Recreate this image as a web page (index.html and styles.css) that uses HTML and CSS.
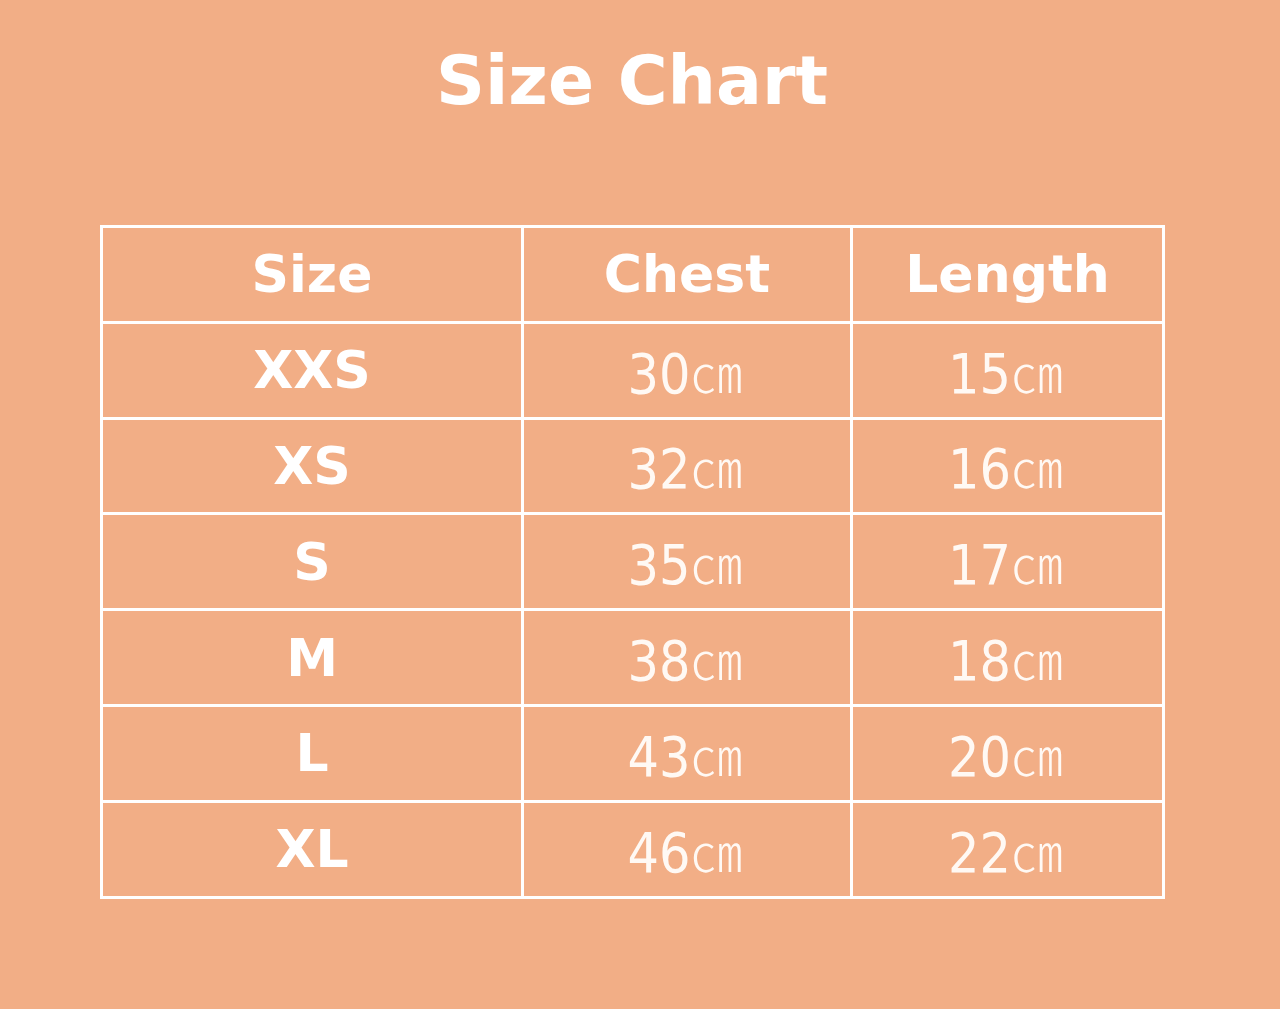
FILE: index.html
```html
<!DOCTYPE html>
<html>
<head>
<meta charset="utf-8">
<title>Size Chart</title>
<link rel="stylesheet" href="styles.css">
</head>
<body>
<div class="page">
  <h1 class="title">Size Chart</h1>
  <table class="chart">
    <colgroup>
      <col class="c1"><col class="c2"><col class="c3">
    </colgroup>
    <thead>
      <tr><th>Size</th><th>Chest</th><th>Length</th></tr>
    </thead>
    <tbody>
      <tr><th>XXS</th><td>30<span class="u">㎝</span></td><td>15<span class="u">㎝</span></td></tr>
      <tr><th>XS</th><td>32<span class="u">㎝</span></td><td>16<span class="u">㎝</span></td></tr>
      <tr><th>S</th><td>35<span class="u">㎝</span></td><td>17<span class="u">㎝</span></td></tr>
      <tr><th>M</th><td>38<span class="u">㎝</span></td><td>18<span class="u">㎝</span></td></tr>
      <tr><th>L</th><td>43<span class="u">㎝</span></td><td>20<span class="u">㎝</span></td></tr>
      <tr><th>XL</th><td>46<span class="u">㎝</span></td><td>22<span class="u">㎝</span></td></tr>
    </tbody>
  </table>
</div>
</body>
</html>
```
FILE: styles.css
```css
html, body {
  margin: 0;
  padding: 0;
  background: #f2ae86;
}
.page {
  width: 1280px;
  height: 1009px;
  background: #f2ae86;
  color: #ffffff;
  font-family: "DejaVu Sans", Verdana, sans-serif;
  padding-top: 41px;
  box-sizing: border-box;
}
.title {
  margin: 0 0 104px 0;
  text-align: center;
  font-size: 68px;
  line-height: 80px;
  font-weight: bold;
  padding-right: 16px;
}
.chart {
  margin-left: 100px;
  width: 1062px;
  border-collapse: collapse;
  border: 3px solid #fff;
  table-layout: fixed;
}
.c1 { width: 421px; }
.c2 { width: 329px; }
.c3 { width: 312px; }
.chart tr { height: 95.8px; }
.chart th, .chart td {
  border: 3px solid #fff;
  padding: 0;
  text-align: center;
  vertical-align: middle;
}
.chart th {
  font-family: "DejaVu Sans", Verdana, sans-serif;
  font-weight: bold;
  font-size: 52px;
}
.chart td {
  font-family: "Liberation Sans Narrow", "DejaVu Sans Condensed", "DejaVu Sans", sans-serif;
  font-weight: normal;
  font-size: 55px;
  color: #fff9f4;
  padding-right: 4px;
}
.u {
  font-family: "Noto Sans CJK JP", sans-serif;
  font-size: 52px;
  font-weight: 300;
}
```
